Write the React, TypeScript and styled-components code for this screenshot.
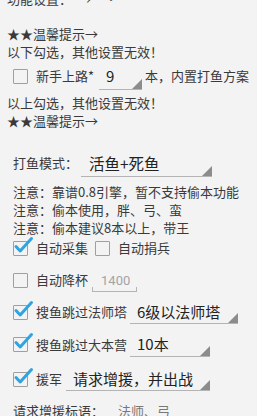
import React from "react";
import styled, { createGlobalStyle } from "styled-components";

const Global = createGlobalStyle`
  html, body { margin: 0; padding: 0; background: #f3f3f3; overflow: hidden; }
  body { font-family: "Noto Sans CJK SC", "Noto Sans", sans-serif; color: #3a3a3a; }
`;

const Page = styled.div`
  width: 257px;
  height: 416px;
  overflow: hidden;
  background: #f3f3f3;
`;

const Inner = styled.div`
  margin-top: -10px;
  display: flex;
  flex-direction: column;
`;

const Line = styled.div<{ $mt?: number; $pl?: number }>`
  font-size: 13px;
  line-height: 18px;
  height: 18px;
  white-space: nowrap;
  padding-left: ${(p) => p.$pl ?? 7}px;
  margin-top: ${(p) => p.$mt ?? 0}px;
`;

const Row = styled.div<{ $h: number; $mt?: number }>`
  display: flex;
  align-items: center;
  height: ${(p) => p.$h}px;
  margin-top: ${(p) => p.$mt ?? 0}px;
  padding-left: 13px;
  font-size: 13px;
  line-height: 18px;
  white-space: nowrap;
`;

const Box = styled.span<{ $ml?: number }>`
  position: relative;
  box-sizing: border-box;
  width: 15px;
  height: 15px;
  border: 1.5px solid #9f9f9f;
  border-radius: 1px;
  flex: none;
  margin-left: ${(p) => p.$ml ?? 0}px;
  margin-right: 8px;
`;

const Tick = styled.svg`
  position: absolute;
  left: 0px;
  top: -5px;
  width: 19px;
  height: 17px;
  overflow: visible;
`;

const Check = ({ checked, ml }: { checked?: boolean; ml?: number }) => (
  <Box $ml={ml}>
    {checked && (
      <Tick viewBox="0 0 19 17">
        <path d="M2 9.5 L6.2 14 L17.5 1.5" fill="none" stroke="#2fa4e0" strokeWidth="3" strokeLinecap="round" strokeLinejoin="round" />
      </Tick>
    )}
  </Box>
);

const Label = styled.span<{ $muted?: boolean; $ml?: number }>`
  font-size: 13px;
  color: ${(p) => (p.$muted ? "#777" : "inherit")};
  margin-left: ${(p) => p.$ml ?? 0}px;
`;

const SpinnerBox = styled.span<{ $w: number; $ml: number; $h: number; $pl: number; $fs: number }>`
  position: relative;
  box-sizing: border-box;
  display: flex;
  align-items: center;
  width: ${(p) => p.$w}px;
  height: ${(p) => p.$h}px;
  margin-left: ${(p) => p.$ml}px;
  padding-left: ${(p) => p.$pl}px;
  border-bottom: 1px solid #b4b4b4;
  font-size: ${(p) => p.$fs}px;
  color: #222;
  flex: none;
`;

const Corner = styled.span`
  position: absolute;
  right: 0;
  bottom: 0;
  width: 0;
  height: 0;
  border-left: 10px solid transparent;
  border-bottom: 10px solid #8c8c8c;
`;

const Spinner = ({
  children,
  w,
  ml,
  h = 24,
  pl = 7,
  fs = 15,
}: {
  children: React.ReactNode;
  w: number;
  ml: number;
  h?: number;
  pl?: number;
  fs?: number;
}) => (
  <SpinnerBox $w={w} $ml={ml} $h={h} $pl={pl} $fs={fs}>
    {children}
    <Corner />
  </SpinnerBox>
);

const Field = styled.span`
  position: relative;
  box-sizing: border-box;
  display: flex;
  align-items: center;
  width: 45px;
  height: 24px;
  margin-left: 4px;
  padding-left: 9px;
  padding-top: 2px;
  color: #a3a3a3;
  font-family: Roboto, "Noto Sans", sans-serif;
  font-size: 13px;
  border-bottom: 1px solid #b4b4b4;
  &::before, &::after {
    content: "";
    position: absolute;
    bottom: 0;
    width: 1px;
    height: 4px;
    background: #b4b4b4;
  }
  &::before { left: 0; }
  &::after { right: 0; }
`;

const After = styled.span`
  margin-left: 3px;
`;

export default function App() {
  return (
    <Page>
      <Global />
      <Inner>
        <Line>功能设置：　→　·</Line>
        <Line $mt={17}>★★温馨提示→</Line>
        <Line>以下勾选，其他设置无效！</Line>
        <Row $h={30}>
          <Check />
          <Label>新手上路*</Label>
          <Spinner w={43} ml={5} h={27}>9</Spinner>
          <After>本，内置打鱼方案</After>
        </Row>
        <Line $mt={3}>以上勾选，其他设置无效！</Line>
        <Line>★★温馨提示→</Line>
        <Row $h={32} $mt={17}>
          <Label>打鱼模式：</Label>
          <Spinner w={131} ml={3} h={27} pl={8} fs={15.5}>活鱼+死鱼</Spinner>
        </Row>
        <Line $mt={4} $pl={13}>注意：靠谱0.8引擎，暂不支持偷本功能</Line>
        <Line $pl={13}>注意：偷本使用，胖、弓、蛮</Line>
        <Line $pl={13}>注意：偷本建议8本以上，带王</Line>
        <Row $h={22}>
          <Check checked />
          <Label>自动采集</Label>
          <Check ml={7} />
          <Label>自动捐兵</Label>
        </Row>
        <Row $h={32} $mt={5}>
          <Check />
          <Label>自动降杯</Label>
          <Field>1400</Field>
        </Row>
        <Row $h={32}>
          <Check checked />
          <Label>搜鱼跳过法师塔</Label>
          <Spinner w={108} ml={3}>6级以法师塔</Spinner>
        </Row>
        <Row $h={33}>
          <Check checked />
          <Label>搜鱼跳过大本营</Label>
          <Spinner w={80} ml={3}>10本</Spinner>
        </Row>
        <Row $h={34} $mt={1}>
          <Check checked />
          <Label>援军</Label>
          <Spinner w={144} ml={4}>请求增援，并出战</Spinner>
        </Row>
        <Row $h={18} $mt={6}>
          <Label>请求增援标语：</Label>
          <Label $muted $ml={14}>法师、弓</Label>
        </Row>
      </Inner>
    </Page>
  );
}
